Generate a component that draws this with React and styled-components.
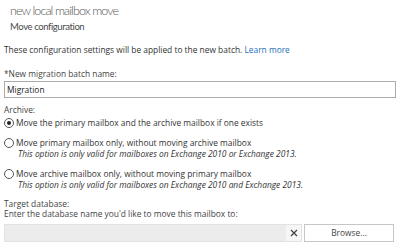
import React from "react"
import styled, { createGlobalStyle } from "styled-components"

const GlobalStyle = createGlobalStyle`
  html, body {
    margin: 0;
    padding: 0;
    background: #ffffff;
  }
  body {
    font-family: "Open Sans", "Noto Sans", sans-serif;
    color: #333333;
  }
`

const options = [
  { label: "Move the primary mailbox and the archive mailbox if one exists", checked: true },
  {
    label: "Move primary mailbox only, without moving archive mailbox",
    note: "This option is only valid for mailboxes on Exchange 2010 or Exchange 2013.",
  },
  {
    label: "Move archive mailbox only, without moving primary mailbox",
    note: "This option is only valid for mailboxes on Exchange 2010 and Exchange 2013.",
  },
]

const App = () => {
  return (
    <>
      <GlobalStyle />
      <Page>
        <Header>
          <Title>new local mailbox move</Title>
          <Subtitle>Move configuration</Subtitle>
        </Header>
        <Intro>
          These configuration settings will be applied to the new batch. <Link>Learn more</Link>
        </Intro>
        <Field gap={14}>
          <Label>*New migration batch name:</Label>
          <TextBox>Migration</TextBox>
        </Field>
        <Field gap={7}>
          <Label>Archive:</Label>
          <OptionList>
            {options.map(o => (
              <Option key={o.label}>
                <Radio checked={o.checked} />
                <OptionText>
                  <span>{o.label}</span>
                  {o.note && <Note>{o.note}</Note>}
                </OptionText>
              </Option>
            ))}
          </OptionList>
        </Field>
        <Field gap={9}>
          <Label>Target database:</Label>
          <Label>Enter the database name you'd like to move this mailbox to:</Label>
          <PickerRow>
            <PickerBox>
              <PickerValue />
              <Clear>
                <svg width="8" height="8" viewBox="0 0 8 8">
                  <path d="M1 1L7 7M7 1L1 7" stroke="#444" strokeWidth="1.3" />
                </svg>
              </Clear>
            </PickerBox>
            <BrowseButton>Browse...</BrowseButton>
          </PickerRow>
        </Field>
      </Page>
    </>
  )
}

export default App

const Page = styled.div`
  width: 398px;
  height: 245px;
  overflow: hidden;
  padding: 0 2px 0 4px;
  box-sizing: border-box;
  font-size: 8.4px;
  line-height: 10px;
`

const Header = styled.div`
  display: flex;
  flex-direction: column;
  padding-left: 6px;
  padding-top: 1px;
`

const Title = styled.h1`
  margin: 0;
  font-family: Lato, "Open Sans", sans-serif;
  font-size: 12.5px;
  letter-spacing: -0.9px;
  line-height: 19px;
  font-weight: 300;
  color: #555555;
`

const Subtitle = styled.h2`
  margin: 0;
  font-family: Lato, "Open Sans", sans-serif;
  font-size: 9.5px;
  letter-spacing: -0.4px;
  line-height: 14px;
  font-weight: 400;
  color: #4a4a4a;
`

const Intro = styled.p`
  margin: 11px 0 0;
`

const Link = styled.span`
  color: #1e6fb8;
`

const Field = styled.div`
  display: flex;
  flex-direction: column;
  margin-top: ${p => p.gap}px;
`

const Label = styled.div`
  color: #444444;
`

const TextBox = styled.div`
  margin-top: 2px;
  height: 15px;
  border: 1px solid #ababab;
  padding-left: 2px;
  line-height: 15px;
  color: #222222;
`

const OptionList = styled.div`
  display: flex;
  flex-direction: column;
  gap: 9px;
  margin-top: 2px;
`

const Option = styled.div`
  display: flex;
  align-items: flex-start;
  gap: 2px;
  line-height: 11px;
`

const Radio = styled.span`
  width: 8px;
  height: 8px;
  margin-top: 1px;
  border: 1px solid #555555;
  border-radius: 50%;
  flex: none;
  position: relative;
  &::after {
    content: "";
    display: ${p => (p.checked ? "block" : "none")};
    position: absolute;
    left: 2px;
    top: 2px;
    width: 4px;
    height: 4px;
    border-radius: 50%;
    background: #222222;
  }
`

const OptionText = styled.div`
  display: flex;
  flex-direction: column;
`

const Note = styled.span`
  font-style: italic;
  padding-left: 2px;
`

const PickerRow = styled.div`
  display: flex;
  gap: 2px;
  margin-top: 5px;
`

const PickerBox = styled.div`
  display: flex;
  width: 296px;
  height: 16px;
  border: 1px solid #e2e2e2;
  background: #ececec;
`

const PickerValue = styled.div`
  flex: 1;
`

const Clear = styled.div`
  width: 15px;
  background: #f6f6f6;
  display: flex;
  align-items: center;
  justify-content: center;
`

const BrowseButton = styled.div`
  width: 88px;
  height: 16px;
  border: 1px solid #c6c6c6;
  background: #ffffff;
  display: flex;
  align-items: center;
  justify-content: center;
  color: #444444;
`
